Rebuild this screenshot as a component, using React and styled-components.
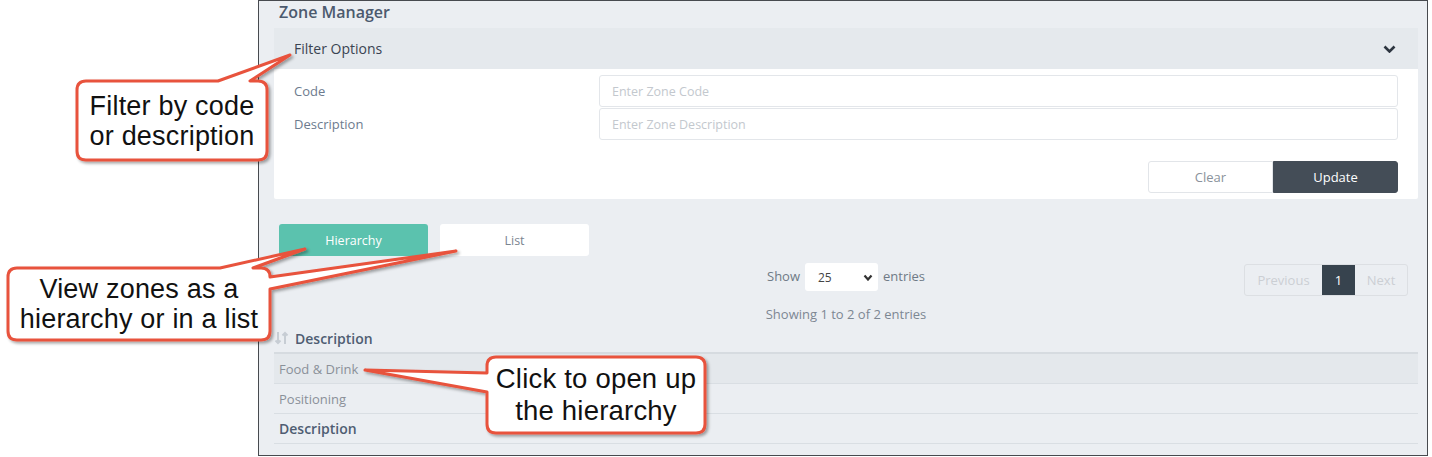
import React from "react";
import styled, { createGlobalStyle } from "styled-components";

const GlobalStyle = createGlobalStyle`
  html, body {
    margin: 0;
    padding: 0;
    background: #ffffff;
  }
  * {
    box-sizing: border-box;
  }
`;

const Page = styled.div`
  position: relative;
  width: 1432px;
  height: 457px;
  overflow: hidden;
  background: #ffffff;
`;

const Frame = styled.div`
  margin-left: 258px;
  width: 1170px;
  height: 456px;
  border: 1px solid #474a4f;
  background: #ebeef2;
  padding: 0 9px 0 15px;
  font-family: "Open Sans", "Noto Sans", sans-serif;
  overflow: hidden;
`;

const Title = styled.div`
  height: 22px;
  line-height: 22px;
  padding-left: 5px;
  margin-bottom: 5px;
  font-size: 16px;
  font-weight: 600;
  color: #4c5a6e;
`;

const Card = styled.div`
  background: #ffffff;
  border-radius: 2px;
`;

const CardHeader = styled.div`
  height: 41px;
  display: flex;
  align-items: center;
  justify-content: space-between;
  padding: 0 22px 0 20px;
  background: #e5e9ed;
  font-size: 14px;
  color: #3a4452;
`;

const CardBody = styled.div`
  padding: 6px 20px 6px;
  display: flex;
  flex-direction: column;
  gap: 1px;
`;

const FieldRow = styled.div`
  display: grid;
  grid-template-columns: 305px 1fr;
  align-items: center;
  height: 32px;
`;

const Label = styled.label`
  font-size: 13px;
  color: #6d7b8e;
`;

const Input = styled.input`
  height: 32px;
  width: 100%;
  border: 1px solid #e3e6ea;
  border-radius: 3px;
  padding: 0 12px;
  font-family: inherit;
  font-size: 12.5px;
  color: #555;
  background: #fff;
  outline: none;

  &::placeholder {
    color: #c3c8ce;
  }
`;

const Actions = styled.div`
  display: flex;
  justify-content: flex-end;
  margin-top: 20px;
`;

const ActionButton = styled.button`
  width: 125px;
  height: 32px;
  font-family: inherit;
  font-size: 13px;
  border: 1px solid ${(p) => (p.$primary ? "#444d57" : "#e2e5e9")};
  background: ${(p) => (p.$primary ? "#444d57" : "#ffffff")};
  color: ${(p) => (p.$primary ? "#ffffff" : "#8a929b")};
  border-radius: ${(p) => (p.$primary ? "0 3px 3px 0" : "3px 0 0 3px")};
`;

const Tabs = styled.div`
  display: flex;
  gap: 12px;
  margin-top: 25px;
  padding-left: 5px;
`;

const Tab = styled.button`
  width: 149px;
  height: 32px;
  border: none;
  border-radius: 3px;
  font-family: inherit;
  font-size: 12.5px;
  background: ${(p) => (p.$active ? "#5bc2ae" : "#ffffff")};
  color: ${(p) => (p.$active ? "#ffffff" : "#7b8590")};
`;

const Controls = styled.div`
  display: grid;
  grid-template-columns: 1fr auto 1fr;
  margin-top: 7px;
  height: 33px;
`;

const Length = styled.div`
  grid-column: 2;
  display: flex;
  align-items: center;
  gap: 5px;
  height: 28px;
  font-size: 13px;
  color: #6f7a86;
`;

const LengthText = styled.span`
  margin-top: -3px;
`;

const SelectBox = styled.div`
  width: 73px;
  height: 28px;
  display: flex;
  align-items: center;
  justify-content: space-between;
  padding: 0 5px 0 13px;
  background: #ffffff;
  border-radius: 3px;
  font-size: 12px;
  color: #444;
`;

const Pager = styled.div`
  grid-column: 3;
  justify-self: end;
  margin: 1px 10px 0 0;
  display: flex;
  height: 32px;
  border: 1px solid #dcdfe3;
  border-radius: 3px;
  overflow: hidden;
`;

const PageItem = styled.div`
  display: flex;
  align-items: center;
  justify-content: center;
  width: ${(p) => p.$w}px;
  font-size: 13px;
  background: ${(p) => (p.$current ? "#37434e" : "transparent")};
  color: ${(p) => (p.$current ? "#ffffff" : "#cbcfd4")};
`;

const Info = styled.div`
  margin-top: 8px;
  height: 20px;
  line-height: 20px;
  text-align: center;
  font-size: 13px;
  color: #7d8793;
`;

const Table = styled.div`
  display: flex;
  flex-direction: column;
`;

const HeadRow = styled.div`
  height: 30px;
  display: flex;
  align-items: center;
  gap: 5px;
  border-bottom: 2px solid #d6dbe0;
  font-size: 14px;
  font-weight: 600;
  color: #4f5d72;
`;

const Row = styled.div`
  height: 30px;
  display: flex;
  align-items: center;
  padding-left: 5px;
  border-bottom: 1px solid #d9dee3;
  background: ${(p) => (p.$shaded ? "#e4e8ec" : "transparent")};
  font-size: ${(p) => (p.$foot ? "14px" : "13px")};
  font-weight: ${(p) => (p.$foot ? 600 : 400)};
  color: ${(p) => (p.$foot ? "#4f5d72" : "#8a9099")};
`;

const Overlay = styled.svg`
  position: absolute;
  left: 0;
  top: 0;
  width: 1432px;
  height: 457px;
  pointer-events: none;
`;

const CalloutText = styled.div`
  position: absolute;
  display: flex;
  align-items: center;
  justify-content: center;
  text-align: center;
  font-family: "Liberation Sans", Arial, sans-serif;
  font-size: ${(p) => p.$size}px;
  line-height: ${(p) => p.$lh}px;
  letter-spacing: 0.2px;
  color: #111111;
`;

const Chevron = ({ w = 13, h = 8, color = "#2d3540", sw = 2.6 }) => (
  <svg width={w} height={h} viewBox={`0 0 ${w} ${h}`}>
    <polyline
      points={`1.5,1.5 ${w / 2},${h - 1.5} ${w - 1.5},1.5`}
      fill="none"
      stroke={color}
      strokeWidth={sw}
    />
  </svg>
);

const SortIcon = () => (
  <svg width="16" height="16" viewBox="0 0 16 16">
    <g fill="none" stroke="#c7cdd4" strokeWidth="2">
      <path d="M4 2v11M1.5 10.5 4 13l2.5-2.5" />
      <path d="M11 14V3M8.5 5.5 11 3l2.5 2.5" />
    </g>
  </svg>
);

const callouts = [
  {
    d: "M86 81H218L290 55L250 81H258Q267 81 267 90V151Q267 160 258 160H86Q77 160 77 151V90Q77 81 86 81Z",
    box: { left: 77, top: 81, width: 190, height: 79 },
    lines: ["Filter by code", "or description"],
    size: 27,
    lh: 30,
  },
  {
    d: "M17 268H220L305 249L253 268H261Q270 268 270 277L456 251L270 289V331Q270 340 261 340H17Q8 340 8 331V277Q8 268 17 268Z",
    box: { left: 8, top: 268, width: 262, height: 72 },
    lines: ["View zones as a", "hierarchy or in a list"],
    size: 27,
    lh: 30,
  },
  {
    d: "M496 357H696Q705 357 705 366V424Q705 433 696 433H496Q487 433 487 424V392L365 370L487 373V366Q487 357 496 357Z",
    box: { left: 487, top: 357, width: 218, height: 76 },
    lines: ["Click to open up", "the hierarchy"],
    size: 27.5,
    lh: 32,
  },
];

export default function App() {
  return (
    <Page>
      <GlobalStyle />
      <Frame>
        <Title>Zone Manager</Title>
        <Card>
          <CardHeader>
            <span>Filter Options</span>
            <Chevron />
          </CardHeader>
          <CardBody>
            <FieldRow>
              <Label>Code</Label>
              <Input placeholder="Enter Zone Code" />
            </FieldRow>
            <FieldRow>
              <Label>Description</Label>
              <Input placeholder="Enter Zone Description" />
            </FieldRow>
            <Actions>
              <ActionButton>Clear</ActionButton>
              <ActionButton $primary>Update</ActionButton>
            </Actions>
          </CardBody>
        </Card>

        <Tabs>
          <Tab $active>Hierarchy</Tab>
          <Tab>List</Tab>
        </Tabs>

        <Controls>
          <Length>
            <LengthText>Show</LengthText>
            <SelectBox>
              25
              <Chevron w={10} h={7} color="#333" sw={2.2} />
            </SelectBox>
            <LengthText>entries</LengthText>
          </Length>
          <Pager>
            <PageItem $w={77}>Previous</PageItem>
            <PageItem $w={33} $current>
              1
            </PageItem>
            <PageItem $w={52}>Next</PageItem>
          </Pager>
        </Controls>

        <Info>Showing 1 to 2 of 2 entries</Info>

        <Table>
          <HeadRow>
            <SortIcon />
            Description
          </HeadRow>
          <Row $shaded>Food &amp; Drink</Row>
          <Row>Positioning</Row>
          <Row $foot>Description</Row>
        </Table>
      </Frame>

      <Overlay viewBox="0 0 1432 457">
        <defs>
          <filter id="shadow" x="-10%" y="-10%" width="130%" height="140%">
            <feDropShadow dx="2" dy="2" stdDeviation="1.5" floodColor="#000" floodOpacity="0.35" />
          </filter>
        </defs>
        {callouts.map((c, i) => (
          <path
            key={i}
            d={c.d}
            fill="#ffffff"
            stroke="#e8533d"
            strokeWidth="3"
            strokeLinejoin="round"
            filter="url(#shadow)"
          />
        ))}
      </Overlay>

      {callouts.map((c, i) => (
        <CalloutText key={i} style={c.box} $size={c.size} $lh={c.lh}>
          <div>
            {c.lines.map((l) => (
              <div key={l}>{l}</div>
            ))}
          </div>
        </CalloutText>
      ))}
    </Page>
  );
}
